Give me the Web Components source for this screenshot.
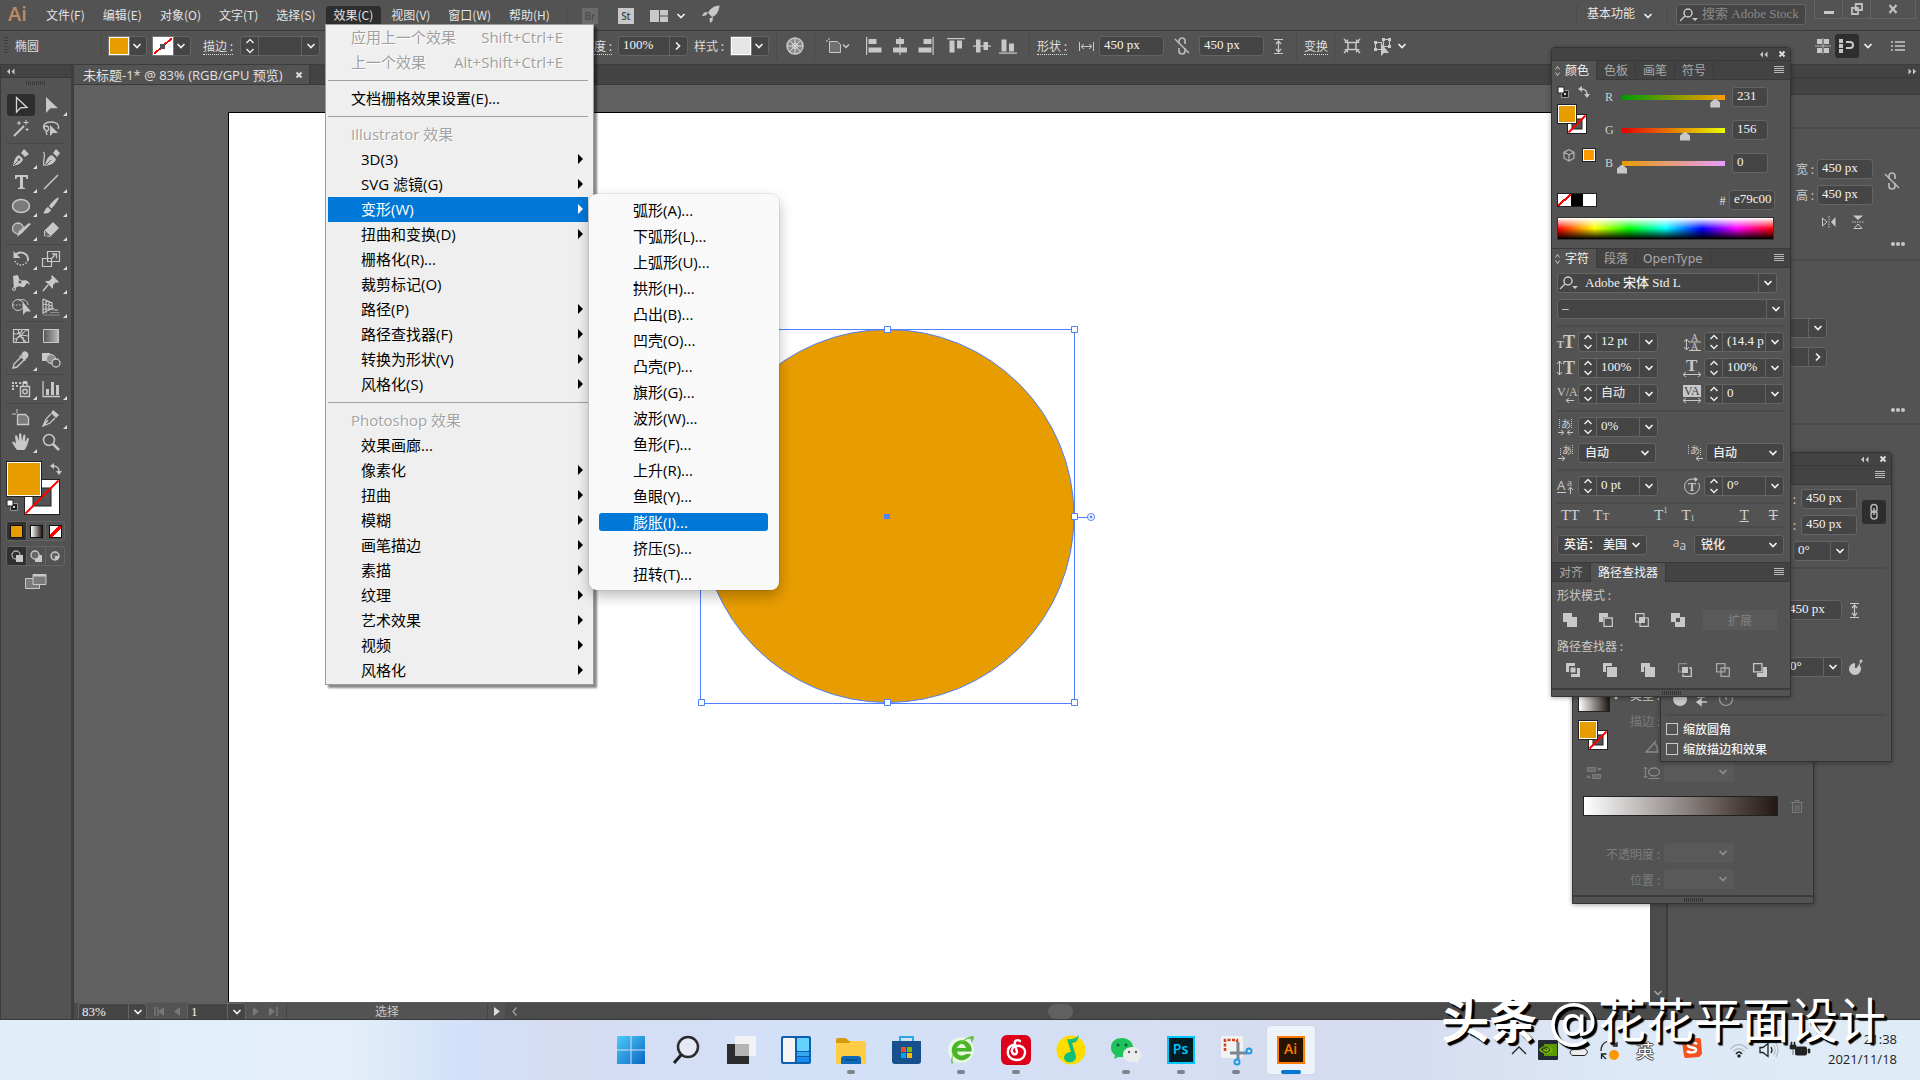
<!DOCTYPE html>
<html lang="zh-CN">
<head>
<meta charset="utf-8">
<title>Illustrator</title>
<style>
html,body{margin:0;height:100%;overflow:hidden;background:#535353}
body{font:12px/16px "Open Sans","Noto Sans CJK SC",sans-serif;color:#e0e0e0}
</style>
</head>
<body>
<ai-app></ai-app>
<script>
const G='#c8c8c8';
const T=(x,y,s,t,w)=>`<text x="${x}" y="${y}" font-size="${s}" font-family="Liberation Serif,Noto Sans CJK JP,serif" font-weight="${w||'bold'}" stroke="none">${t}</text>`;
/* name: [width, height, markup] */
const ICONS={
 sel:[20,20,'<path d="M5.500 2.500v14.500l4-4.200 6.500-.3z" fill="none" stroke="#d8d8d8" stroke-width="1.300"/>'],
 dsel:[20,20,'<path d="M5 2v16l4.500-4.700H17z"/>'],
 wand:[20,20,'<path d="M3 17L13 7" stroke="#c8c8c8" stroke-width="2"/><path d="M8 2v4M6 4h4M15 1v5M12.500 3.500h5M16 9v3M14.500 10.500h3" stroke="#c8c8c8" stroke-width="1"/>'],
 lasso:[20,20,'<path d="M6 12c-6-2-4-9 4-9 7 0 8.500 4 7 7M6 12c-3-1-4-5-1-5s4 4 0 6l1 3" fill="none" stroke="#c8c8c8" stroke-width="1.300"/><path d="M9 6v11l3-3h5z"/>'],
 pen:[20,20,'<path d="M2 18c1-5 2-9 6-11l4 4c-1 4-5 6-10 7zM10 5l3-4 5 5-4 3z"/><path d="M3 17l5-5" stroke="#535353"/><circle cx="8" cy="11.500" r="1.200" fill="#535353"/>'],
 curv:[20,20,'<path d="M4 18c1-5 2-9 7-11l4 4c-1 4-5 6-11 7zM12 5l3-4 4 4-3 4z"/><path d="M5 17l5-5" stroke="#535353"/><path d="M2 4c4 1-1 8 1 14" stroke="#c8c8c8" fill="none" stroke-width="1.200"/>'],
 type:[20,20,'<path d="M4 3h13v4h-1.500l-.5-2h-3v10.500l2 .5v1H7v-1l2-.5V5H6l-.500 2H4z"/>'],
 line:[20,20,'<path d="M3 17L17 3" stroke="#c8c8c8" stroke-width="1.500"/>'],
 ell:[20,20,'<ellipse cx="10" cy="10" rx="8.500" ry="6.500" fill="#7b7b7b" stroke="#c8c8c8" stroke-width="1.500"/>'],
 brush:[20,20,'<path d="M17.500 1.500c1 1-4 8-7 11L8 10C11 6 16 1 17.500 1.500zM7 11l3 3c-1 3-5 4-8 3 2-1 2-5 5-6z"/>'],
 shaper:[20,20,'<circle cx="7" cy="8.500" r="5.500" fill="#7b7b7b" stroke="#c8c8c8" stroke-width="1.300"/><path d="M20 4l-9 9-5 4 2-6 10-8z"/>'],
 eraser:[20,20,'<path d="M3 11L12 2l6 6-9 9-6-1z"/><path d="M4 11l5 5" stroke="#535353"/><path d="M4 12l4 4-4-.5z" fill="#535353"/>'],
 rotate:[20,20,'<path d="M4 7a7 7 0 0 1 13 4" fill="none" stroke="#c8c8c8" stroke-width="2"/><path d="M17 11a7 7 0 0 1-13 1" fill="none" stroke="#c8c8c8" stroke-width="1.500" stroke-dasharray="1.500 1.500"/><path d="M2.500 2v7h7z"/>'],
 scale:[20,20,'<path d="M6.500 2.500h12v10h-12zM1.500 9.500h9v8h-9z" fill="none" stroke="#c8c8c8" stroke-width="1.200"/><path d="M10 10l4-4M11 5h4.500v4.500" fill="none" stroke="#c8c8c8" stroke-width="1.300"/>'],
 width:[20,20,'<path d="M2 3l4-1c3 1 1 6 4 6 3-1 7-2 9 4l-3-2c-2 2-2 5-5 4-3-2-6 0-8 2" fill="#c8c8c8"/><path d="M3 15c4-3 5-8 3-12" stroke="#c8c8c8" fill="none"/><circle cx="9" cy="9" r="2" fill="#535353" stroke="#c8c8c8"/><circle cx="3" cy="16" r="1.500" fill="#535353" stroke="#c8c8c8"/>'],
 pin:[20,20,'<path d="M11 2l7 7-2 1-1-1-3 3v4l-8-8h4l3-3-1-1z"/><path d="M7 12l-5 6" stroke="#c8c8c8" stroke-width="1.500"/>'],
 sbuild:[20,20,'<circle cx="7" cy="8" r="5.500" fill="none" stroke="#c8c8c8"/><path d="M8 4c3-3 9-1 9 4" fill="none" stroke="#c8c8c8"/><path d="M2 8h10" stroke="#c8c8c8" stroke-dasharray="1.500 1.500"/><path d="M12 5v13l3-3.500h5z"/>'],
 persp:[20,20,'<path d="M2 2v15M2 2l9 4v7M5 3v13M8 5v9M2 7l9 2M2 12h9" fill="none" stroke="#c8c8c8" stroke-width="1.200"/><path d="M2 16l10-5 2 2h3" fill="none" stroke="#c8c8c8"/><path d="M11 13h5M9 15.500h9M2 18h17" stroke="#8f8f8f"/>'],
 mesh:[20,20,'<path d="M2.500 3.500h15v13h-15zM3 8c5 0 8-1 8-4M5 16c1-6 4-8 12-6M3 13c4 0 7-4 8-5s3-4 6-4M7 4c1 4 2 7 8 12M12 11c0 2 0 3 1 5" fill="none" stroke="#c8c8c8" stroke-width="1.200"/>'],
 grad:[20,20,'<defs><linearGradient id="g"><stop stop-color="#555"/><stop offset="1" stop-color="#bbb"/></linearGradient></defs><path d="M2.500 3.500h15v13h-15z" fill="url(#g)" stroke="#c8c8c8"/>'],
 drop:[20,20,'<path d="M12 2c2-2 7 1 5 5l-3 3-4-5zM9 5l6 5-1 1-6-5z"/><path d="M10 7l-7 7-1 4 4-1 7-7" fill="none" stroke="#c8c8c8" stroke-width="1.400"/>'],
 blend:[20,20,'<path d="M1 3h8v8H1z"/><circle cx="10" cy="9" r="4.500" fill="#8c8c8c" stroke="#c8c8c8"/><circle cx="15" cy="13" r="4" fill="#535353" stroke="#c8c8c8" stroke-width="1.300"/>'],
 spray:[20,20,'<path d="M9.500 7.500h9v10h-9zM12 7V4h4v3" fill="none" stroke="#c8c8c8" stroke-width="1.400"/><path d="M12 2h4v3h-4z"/><circle cx="14" cy="12.500" r="2.200" fill="none" stroke="#c8c8c8" stroke-width="1.400"/><path d="M1 3h2v2H1zM4 3h2v2H4zM8 3h2v2H8zM1 6h2v2H1zM5 6h2v2H5zM1 9h2v2H1z"/>'],
 graph:[20,20,'<path d="M2 2v15.500h17" fill="none" stroke="#c8c8c8" stroke-width="1.300"/><path d="M5 10h3v6H5zM10 3h3v13h-3zM15 6h3v10h-3z"/>'],
 artb:[20,20,'<path d="M6.500 6.500h8l3 3v7h-11z" fill="#7b7b7b" stroke="#c8c8c8" stroke-width="1.300"/><path d="M6 1v4M1 6h4" stroke="#c8c8c8"/>'],
 slice:[20,20,'<path d="M12 2l6 5-3 3-5-5z"/><path d="M10 6l-5 5-3 7 7-3 5-5M3 17l4-5" fill="none" stroke="#c8c8c8" stroke-width="1.300"/>'],
 hand:[20,20,'<path d="M6 18c-2-3-4-5-5-8 1-1 3 0 4 2L4 4c1-1.500 2-.500 2.500 1L8 9V2c1-1.200 2-1 2.300 0L11 9l1.500-6c1-1 2 0 2 1L14 10l2.500-4c1-.5 1.500.5 1.300 1.500C17 11 16 15 13.500 18z"/>'],
 zoom:[20,20,'<circle cx="8" cy="8" r="5.500" fill="none" stroke="#c8c8c8" stroke-width="1.500"/><path d="M12 12l6 6" stroke="#c8c8c8" stroke-width="2.500"/>'],
 swap:[12,12,'<path d="M3 3c4 0 6 1 6 6" fill="none" stroke="#c8c8c8" stroke-width="1.500"/><path d="M4 0v6L0 3zM6 8h6l-3 4z"/>'],
 deflt:[12,12,'<path d="M4.500 4.500h7v7h-7z" fill="#222" stroke="#999"/><path d="M7 7h2v2H7z" fill="#ccc"/><path d="M1 1h6v6H1z" fill="#fff" stroke="#222"/>'],
 screens:[24,18,'<path d="M1.500 5.500h14v10h-14z" fill="#7b7b7b" stroke="#c8c8c8"/><path d="M9 1.500h13v10H9z" fill="#7b7b7b" stroke="#c8c8c8"/><path d="M9 2.500h13" stroke="#c8c8c8" stroke-width="2"/>'],
 dm1:[14,14,'<circle cx="6" cy="6" r="4" fill="none" stroke="#aaa" stroke-width="1.300"/><path d="M6 6h7v7H6z"/>'],
 dm2:[14,14,'<path d="M6 6h7v7H6z"/><circle cx="6" cy="6" r="4" fill="#666" stroke="#c8c8c8" stroke-width="1.300"/>'],
 dm3:[14,14,'<circle cx="7" cy="7" r="4" fill="#666" stroke="#c8c8c8" stroke-width="1.500"/><path d="M7 7h4a4 4 0 0 1-4 4z"/>'],
 chev:[10,6,'<path d="M1.500 1l3.500 3.500L8.500 1" fill="none" stroke="#f0f0f0" stroke-width="1.700"/>'],
 chevr:[6,10,'<path d="M1 1.500L4.500 5 1 8.500" fill="none" stroke="#f0f0f0" stroke-width="1.700"/>'],
 step:[10,16,'<path d="M1.500 5L5 1.500 8.500 5M1.500 11L5 14.500 8.500 11" fill="none" stroke="#e8e8e8" stroke-width="1.500"/>'],
 dbl:[9,7,'<path d="M4 .5L1 3.500l3 3zM8.500.5l-3 3 3 3z" fill="#c8c8c8"/>'],
 dblr:[9,7,'<path d="M.5.5l3 3-3 3zM5 .5l3 3-3 3z"/>'],
 x:[8,8,'<path d="M1.500 1.500l5 5M6.500 1.500l-5 5" stroke="#dcdcdc" stroke-width="2"/>'],
 ham:[10,8,'<path d="M0 .5h10M0 2.500h10M0 4.500h10M0 6.500h10" stroke="#b8b8b8"/>'],
 diam:[5,10,'<path d="M.5 3.500l2-3 2 3M.5 6.500l2 3 2-3" fill="none" stroke="#c8c8c8"/>'],
 dots:[14,4,'<circle cx="2" cy="2" r="2"/><circle cx="7" cy="2" r="2"/><circle cx="12" cy="2" r="2"/>'],
 layout:[18,12,'<path d="M0 0h9v12H0zM10 0h8v5.500h-8zM10 6.500h8V12h-8z"/>'],
 rocket:[18,18,'<path d="M17.500.5C11 1 8 4 6 8l4 4c5-2 7-6 7.500-11.500zM6 7L2 7.500 0 11l4-.500zM11 12l-.5 4L8 18l-.500-4.500z"/>'],
 globe:[18,18,'<circle cx="9" cy="9" r="8" fill="#8a8a8a" stroke="#c8c8c8" stroke-width="1.500"/><circle cx="9" cy="9" r="2.500" fill="none" stroke="#d8d8d8"/><path d="M9 1v16M1 9h16M3.500 3.500l11 11M14.500 3.500l-11 11" stroke="#d8d8d8"/>'],
 doc:[26,16,'<path d="M3.500 3.500h8l3 3v8h-11z" fill="#707070" stroke="#c8c8c8"/><path d="M3 0v2M0 3h2" stroke="#c8c8c8"/><path d="M17 6.500l3 3 3-3" fill="none" stroke="#c8c8c8" stroke-width="1.500"/>'],
 al1:[16,18,'<path d="M0 0h1.200v18H0zM2.500 2h8v5h-8zM2.500 10.500h13v5h-13z"/>'],
 al2:[16,18,'<path d="M7.500 0h1.200v18H7.500zM4 2h8v5H4zM1 10.500h14v5H1z"/>'],
 al3:[16,18,'<path d="M14.500 0h1.200v18h-1.200zM5.500 2h8v5h-8zM.5 10.500h13v5H.5z"/>'],
 al4:[18,16,'<path d="M0 0h18v1.200H0zM2.500 2.500h5v12h-5zM10 2.500h5v8h-5z"/>'],
 al5:[18,16,'<path d="M0 7.500h18v1.200H0zM3 1.500h4.500v13H3zM10.500 4h4.500v8h-4.500z"/>'],
 al6:[18,16,'<path d="M0 14.500h18v1.200H0zM2.500 1.500h5v12h-5zM10 5.500h5v8h-5z"/>'],
 hw:[15,9,'<path d="M.5 0v9M14.500 0v9M3 4.500h9M5 2L2 4.500 5 7M10 2l3 2.500L10 7" fill="none" stroke="#c8c8c8"/>'],
 vh:[9,15,'<path d="M0 .5h9M0 14.500h9M4.500 3v9M2 5l2.500-3L7 5M2 10l2.500 3L7 10" fill="none" stroke="#c8c8c8" stroke-width="1.200"/>'],
 unlink:[16,18,'<path d="M5 7V4a3 3 0 0 1 6 0v3M5 11v3a3 3 0 0 0 6 0v-3" fill="none" stroke="#b8b8b8" stroke-width="1.700"/><path d="M1 2l14 14" stroke="#b8b8b8" stroke-width="1.500"/>'],
 link:[10,18,'<rect x="2" y="1.500" width="6" height="8" rx="3" fill="none" stroke="#b8b8b8" stroke-width="1.500"/><rect x="2" y="8" width="6" height="8" rx="3" fill="none" stroke="#b8b8b8" stroke-width="1.500"/><path d="M5 5v7" stroke="#b8b8b8" stroke-width="1.500"/>'],
 iso:[18,16,'<path d="M5 4.500h8v7H5z" fill="none" stroke="#c8c8c8" stroke-width="1.500"/><path d="M1 1l3 3M17 1l-3 3M1 15l3-3M17 15l-3-3" stroke="#c8c8c8" stroke-width="1.500"/><path d="M5 1v4H1zM13 1v4h4zM5 15v-4H1zM13 15v-4h4z"/>'],
 simi:[18,18,'<path d="M1.500 5.500h6v7h-6zM9.500 2.500h6v7h-6z" fill="none" stroke="#c8c8c8" stroke-width="1.200"/><path d="M0 4h3v3H0zM0 11h3v3H0zM8 1h3v3H8zM14 1h3v3h-3zM14 8h3v3h-3z"/><path d="M7 6v13l3-3h5z"/>'],
 gridi:[16,16,'<path d="M2 1h5v5H2zM9 1h5v5H9zM2 10h5v5H2zM9 10h5v5H9z"/><path d="M8 0v16M0 8h16" stroke="#c8c8c8" stroke-width=".8"/>'],
 snap:[18,16,'<path d="M1 1h4v4H1zM1 6h4v4H1zM1 11h4v4H1z"/><path d="M8 4h4a3 3 0 0 1 0 6H8" fill="none" stroke="#c8c8c8" stroke-width="2"/>'],
 list:[14,10,'<path d="M0 1h2M4 1h10M0 5h2M4 5h10M0 9h2M4 9h10" stroke="#c8c8c8" stroke-width="1.400"/>'],
 search:[18,14,'<circle cx="8" cy="5" r="4" fill="none" stroke="#c8c8c8" stroke-width="1.500"/><path d="M5 8l-5 5" stroke="#c8c8c8" stroke-width="1.500"/><path d="M12 10h6l-3 3z"/>'],
 cube:[12,13,'<path d="M6 .7l5 2.500v6L6 12 1 9.200v-6zM1 3.200l5 2.500 5-2.500M6 5.700V12" fill="none" stroke="#b0b0b0" stroke-width="1.200"/>'],
 fliph:[14,12,'<path d="M0.500 2v8L5 6z" fill="none" stroke="#c8c8c8"/><path d="M13.500 1v10L9 6z"/><path d="M7 0v12" stroke="#c8c8c8" stroke-dasharray="1.500 1"/>'],
 flipv:[12,14,'<path d="M2 13.500h8L6 9z" fill="none" stroke="#c8c8c8"/><path d="M1 .5h10L6 5z"/><path d="M0 7h12" stroke="#c8c8c8" stroke-dasharray="1.500 1"/>'],
 c1:[18,18,T(0,15,10,'T')+T(6,15,18,'T')],
 c2:[18,18,'<path d="M2.500 2v14M0 5l2.500-3L5 5M0 13l2.500 3L5 13" fill="none" stroke="#c8c8c8"/>'+T(6,15,18,'T')],
 c3:[18,18,T(0,11,12,'V/A','normal')+'<path d="M17 15.500H10M12 13l-3 2.500 3 2.500" fill="none" stroke="#c8c8c8"/>'],
 d1:[18,18,'<path d="M3.500 6v11M1 9l2.500-3L6 9M1 14l2.500 3L6 14M6 9h12M6 17.500h12" fill="none" stroke="#c8c8c8"/>'+T(8,8,10,'A','normal')+T(8,17,10,'A','normal')],
 d2:[18,18,T(3,12,17,'T')+'<path d="M1 15.500h16M3 13l-3 2.500L3 18M15 13l3 2.500-3 2.500" fill="none" stroke="#c8c8c8"/>'],
 d3:[18,18,'<path d="M0 0h18v12H0z"/><text x="1" y="10" font-size="12" font-family="Liberation Serif" fill="#444">VA</text><path d="M1 15.500h16M3 13l-3 2.500L3 18M15 13l3 2.500-3 2.500" fill="none" stroke="#c8c8c8"/>'],
 ts1:[18,16,'<path d="M2.500 0v10M14.500 0v10" stroke="#c8c8c8" stroke-dasharray="1 1"/>'+T(4,9,10,'あ','normal')+'<path d="M1 13.500h5M16 13.500h-5M4 11l3 2.500L4 16M13 11l-3 2.500 3 2.500" fill="none" stroke="#c8c8c8"/>'],
 ts2:[18,16,'<path d="M3.500 3v7M15.500 0v10" stroke="#c8c8c8" stroke-dasharray="1 1"/>'+T(5,9,10,'あ','normal')+'<path d="M1 13.500h6M5 11l3 2.500L5 16" fill="none" stroke="#c8c8c8"/>'],
 ts3:[16,16,'<path d="M1.500 0v10M13.500 3v7" stroke="#c8c8c8" stroke-dasharray="1 1"/>'+T(3,9,10,'あ','normal')+'<path d="M16 13.500h-6M12 11l-3 2.500 3 2.500" fill="none" stroke="#c8c8c8"/>'],
 base:[18,16,'<text x="0" y="12" font-size="13" font-family="Open Sans">A</text><text x="10" y="8" font-size="9" font-family="Open Sans">a</text><path d="M0 14.500h9M13.500 16v-6M11 12l2.500-3 2.500 3" fill="none" stroke="#c8c8c8"/>'],
 rot:[18,18,'<circle cx="9" cy="9.500" r="7.500" fill="none" stroke="#c8c8c8" stroke-dasharray="40 3"/>'+T(5,14,12,'T')+'<path d="M11 0l4 2-3 3z"/>'],
 pu:[14,14,'<path d="M0 0h9v4h5v10H4V9H0z"/>'],
 pm:[14,14,'<path d="M0 0h9v4H4v5H0z"/><path d="M5 5h8.300v8.300H5z" fill="none" stroke="#c8c8c8" stroke-width="1.300"/>'],
 pi:[14,14,'<path d="M.6.600h8.300v8.300H.6zM5 5h8.300v8.300H5z" fill="none" stroke="#c8c8c8" stroke-width="1.200"/><path d="M4 4h6v6H4z"/>'],
 pe:[14,14,'<path fill-rule="evenodd" d="M0 0h9v4h5v10H4V9H0zM5 5v4h4V5z"/>'],
 pd:[14,14,'<path d="M0 0h9v3H3v6H0zM11 5h3v9H5v-3h6z"/><path d="M4.500 4.500h5v5h-5z" fill="#c8c8c8"/>'],
 pt:[14,14,'<path d="M0 0h9v3H3v6H0zM4 4h10v10H4z"/>'],
 pg:[14,14,'<path d="M0 0h9v4h5v10H4V9H0z"/><path d="M3.500 9V4" stroke="#535353"/>'],
 pc:[14,14,'<path d="M.6.600h8.300M.6.600v8.300h3" fill="none" stroke="#8a8a8a" stroke-width="1.200"/><path d="M11 5h2.300v8.300H5V11" fill="none" stroke="#c8c8c8" stroke-width="1.300"/><path d="M4 4h6v6H4z"/>'],
 po:[14,14,'<path d="M.6.600h8.300v8.300H.6zM5 5h8.300v8.300H5z" fill="none" stroke="#a8a8a8" stroke-width="1.300"/>'],
 pb:[14,14,'<path d="M10 4h4v10H4v-4h6z"/><path d="M.6.600h8.300v8.300H.6z" fill="#535353" stroke="#c8c8c8" stroke-width="1.300"/>'],
 dial:[14,16,'<path d="M6 4a6 6 0 1 0 6 6c0-1-.5-3-1.500-4L8 9 6 9z"/><circle cx="12" cy="2" r="1.500"/><path d="M8 9l4-6" stroke="#c8c8c8"/>'],
 pie:[62,14,'<path d="M7 0a7 7 0 1 0 .1 0zM7 0v3z"/><path d="M25 10h9M28 7l-4 3 4 3zM24 5h8" fill="#c8c8c8" stroke="#c8c8c8" stroke-width="1.500"/><circle cx="53" cy="7" r="6.500" fill="none" stroke="#a0a0a0" stroke-width="1.200"/><path d="M53 3v5" stroke="#c8c8c8"/>'],
 tri:[6,4,'<path d="M0 0h6L3 4z"/>'],
 angle:[15,13,'<path d="M11 1L1 12h13M9 3c3 2 4 5 3 9" fill="none" stroke="#8a8a8a" stroke-width="1.300"/>'],
 aspect:[17,14,'<ellipse cx="11" cy="6" rx="5.500" ry="4" fill="none" stroke="#8a8a8a" stroke-width="1.300"/><path d="M2.500 1v11M.5 3l2-2 2 2M.5 10l2 2 2-2M5.500 12.500h11" fill="none" stroke="#8a8a8a"/>'],
 rev:[16,14,'<path d="M1.500 1.500h8v4h-8zM6.500 8.500h8v4h-8z" fill="#6a6a6a" stroke="#7b7b7b"/><path d="M11 2h5l-2.500 3zM0 12h5L2.500 9z" fill="#7b7b7b"/>'],
 trash:[12,13,'<path d="M1.500 3v9.500h9V3M0 2.500h12M4 2V.5h4V2M4 5v6M6 5v6M8 5v6" fill="none" stroke="#7b7b7b"/>'],
 first:[10,9,'<path d="M1 0v9M4 0v9" stroke="#777" stroke-width="1.500"/><path d="M10 0v9L4 4.500z" fill="#777"/>'],
 prev:[6,9,'<path d="M6 0v9L0 4.500z" fill="#777"/>'],
 next:[6,9,'<path d="M0 0v9l6-4.500z" fill="#777"/>'],
 last:[10,9,'<path d="M8 0v9" stroke="#777" stroke-width="1.500"/><path d="M0 0v9l6-4.500z" fill="#777"/>'],
 play:[6,9,'<path d="M0 0v9l6-4.500z" fill="#ddd"/>'],
 back:[5,9,'<path d="M4.500.5l-3.500 4 3.500 4" fill="none" stroke="#a0a0a0" stroke-width="1.300"/>'],
 win:[30,30,'<defs><linearGradient id="g" x2="1" y2="1"><stop stop-color="#4fcbf8"/><stop offset="1" stop-color="#0a66c4"/></linearGradient></defs><path d="M1 1h13.500v13.500H1zM15.500 1H29v13.500H15.500zM1 15.500h13.500V29H1zM15.500 15.500H29V29H15.500z" fill="url(#g)"/>'],
 find:[30,30,'<circle cx="17" cy="12" r="10" fill="#e4ebf6" stroke="#2b2b2b" stroke-width="2.500"/><path d="M10 20l-7 8" stroke="#1d1d1d" stroke-width="3"/>'],
 task:[30,30,'<path d="M1 9h22v20H1z" fill="#2c2c2c"/><path d="M9 1h21v20H9z" fill="#f2f2f2" opacity=".95"/><path d="M9 9h14v12H9z" fill="#b4b4b4"/>'],
 widg:[30,30,'<rect x="0" y="1" width="30" height="28" rx="2" fill="#0f5fae"/><rect x="2" y="3" width="12" height="24" rx="1" fill="#f5f5f5"/><rect x="16" y="3" width="12" height="13" rx="1" fill="#64d2fa"/><rect x="16" y="17" width="12" height="4" fill="#31a8ee"/><rect x="16" y="22" width="12" height="5" fill="#1b8ff0"/>'],
 folder:[32,30,'<path d="M1 5q0-2 2-2h8l3 3h16q1 0 1 1v20q0 2-2 2H3q-2 0-2-2z" fill="#d99a10"/><path d="M1 8h13l2-2h15v21q0 2-2 2H3q-2 0-2-2z" fill="#ffcd45"/><path d="M6 29v-5q0-3 3-3h14q3 0 3 3v5z" fill="#0f68b8"/><path d="M10 25h12" stroke="#0a4a88" stroke-width="1.500"/>'],
 store:[30,30,'<path d="M9 7V2h13v5" fill="none" stroke="#2aa7e8" stroke-width="2"/><path d="M1 6h29v20q0 3-3 3H4q-3 0-3-3z" fill="#17508c"/><path d="M10 12h5v5h-5z" fill="#f25022"/><path d="M16 12h5v5h-5z" fill="#7fba00"/><path d="M10 18h5v5h-5z" fill="#00a4ef"/><path d="M16 18h5v5h-5z" fill="#ffb900"/>'],
 ie:[30,30,'<circle cx="15" cy="15" r="13" fill="#e9f7e2"/><path d="M25 19a10 10 0 1 1 .5-6l.2 3.500H11q1 4.500 5 4 3-.5 4-1.500zM11 13h9q-1-4-4.500-4T11 13z" fill="#49b427" fill-rule="evenodd"/><path d="M6 29C2 25 12 3 27 1c3 1-1 6-2 7 1-5-1-6-7-2C9 12 5 22 7 28z" fill="#64c53b"/>'],
 net:[30,30,'<rect width="30" height="30" rx="6" fill="#dd001b"/><path d="M19 6c-3-2-6 0-5 3l2 8c0 3-4 3-5 0-1-4 3-7 8-6 8 2 6 14-3 14-7 0-10-5-9-9 0-3 2-5 5-6" fill="none" stroke="#fff" stroke-width="2.400" stroke-linecap="round"/>'],
 qq:[30,30,'<circle cx="15" cy="15" r="14.500" fill="#ffdc00"/><path d="M11 4c4 1 8 0 12-4-1 5-3 8-7 8l4 13c1 7-11 9-12 2 0-4 4-6 7-6z" fill="#0fbf7c"/>'],
 wechat:[32,30,'<path d="M1 13C1 6 6 3 12 3s11 4 11 9-5 10-11 10l-4 0-4 2 1-4c-3-2-4-4-4-7z" fill="#1ec45a"/><circle cx="8" cy="10" r="1.500" fill="#155"/><circle cx="16" cy="10" r="1.500" fill="#155"/><path d="M13 20c0-5 4-8 9-8s9 3 9 8c0 3-1 5-3 6v2l-3-1c-6 1-12-2-12-7z" fill="#ececec"/><circle cx="19" cy="17" r="1.200" fill="#555"/><circle cx="26" cy="17" r="1.200" fill="#555"/>'],
 snip:[32,30,'<rect x="1" y="1" width="22" height="22" rx="2" fill="#f2f2f2"/><path d="M5 16V5h12v2" fill="none" stroke="#d4431a" stroke-width="2.500" stroke-dasharray="3 1.500"/><path d="M18 7v17M10 18h17" stroke="#7b8794" stroke-width="3"/><circle cx="17" cy="27" r="2.500" fill="none" stroke="#1f9bde" stroke-width="2"/><circle cx="29" cy="16" r="2.500" fill="none" stroke="#1f9bde" stroke-width="2"/>'],
 up:[16,9,'<path d="M1 8l7-7 7 7" fill="none" stroke="#222" stroke-width="1.300"/>'],
 nv:[20,20,'<rect width="20" height="20" rx="1" fill="#232a33"/><path d="M6 4h13v12H6z" fill="#5b9a00"/><path d="M1 10c4-6 11-5 14 0-3 5-10 5-14 0z" fill="#76b900"/><path d="M3 10c3-4 7-4 9 0-2 3-6 3-8 0 2-2 4-2 5 0" fill="none" stroke="#223"/>'],
 cloud:[20,14,'<path d="M4 12.500c-4-1-4-6 1-6 1-5 8-5 9-1 5 0 6 6 1 7z" fill="#eee" stroke="#222"/>'],
 sync:[20,20,'<path d="M1 11C1 6 3 3 7 1.500M12 1.500c2 1 4 2 5 4M17 2v4h-4M6 19l-4-4M1.500 19v-5h5" fill="none" stroke="#222" stroke-width="1.300"/><circle cx="14" cy="15" r="5" fill="#ff9800"/>'],
 sogou:[20,20,'<path d="M2 1l15-1q2 0 2 2l1 14-3 3-13 1q-2 0-2-2L0 4z" fill="#f4511e"/><path d="M15 6c-3-2-9-2-9 1 0 4 8 1 8 5 0 3-7 3-9 1" fill="none" stroke="#fff" stroke-width="2.500"/>'],
 wifi:[18,16,'<path d="M.5 7q8.500-9 17 0M3.500 9.500q5.500-6 11 0" fill="none" stroke="#b7bfc8" stroke-width="1.500"/><path d="M6 12q3-4 6 0" fill="none" stroke="#222" stroke-width="1.500"/><circle cx="9" cy="14" r="1.700" fill="#222"/>'],
 vol:[20,16,'<path d="M1 5.500h3L9 1.500v13L4 10.500H1z" fill="none" stroke="#222" stroke-width="1.300"/><path d="M12 5q2 3 0 6" fill="none" stroke="#222" stroke-width="1.300"/><path d="M14.500 3q3.500 5 0 10M17 1q4 7 0 14" fill="none" stroke="#b7bfc8" stroke-width="1.200"/>'],
 bat:[20,16,'<rect x="5" y="4.500" width="12" height="9" rx="2" fill="#222"/><path d="M18 7h2v4h-2zM0 3h6v4H0zM1 0h1v3H1zM4 0h1v3H4zM3 7v6" fill="#222" stroke="#222" stroke-width=".6"/>'],
 min:[10,12,'<path d="M0 8h10v3H0z"/>'],
 rest:[12,12,'<path d="M4.700 1h6.300v6H4.700zM1 5h6v6H1z" fill="none" stroke="#c0c0c0" stroke-width="1.800"/>'],
 cls:[10,10,'<path d="M1.500 1l7 8M8.500 1l-7 8" stroke="#c0c0c0" stroke-width="2.200"/>']
};
const BASE=`<style>
*{box-sizing:border-box}
:host{display:block;box-sizing:border-box}
button,input,select{font:inherit;color:inherit;margin:0;padding:0;border:0;background:none;border-radius:0;outline:0;min-width:0}
button{display:inline-flex;align-items:center;justify-content:center;white-space:nowrap}
select{appearance:none}
</style>`;
const define=(name,html)=>customElements.define(name,class extends HTMLElement{
  constructor(){super();this.attachShadow({mode:'open'});}
  connectedCallback(){this.shadowRoot.innerHTML=BASE+(typeof html==='function'?html(this):html);}
});
const ic=n=>`<ui-icon name="${n}"></ui-icon>`;

define('ui-icon',e=>{const [w,h,m]=ICONS[e.getAttribute('name')];
  return `<style>:host{display:inline-block;flex:none;width:${w}px;height:${h}px}svg{display:block;overflow:visible}</style><svg width="${w}" height="${h}" viewBox="0 0 ${w} ${h}" fill="${G}" aria-hidden="true">${m}</svg>`;});

/* numeric box: optional stepper, text input, optional end button */
define('num-field',e=>{const a=n=>e.getAttribute(n);
 return `<style>
 :host{display:flex;height:20px;flex:none;width:${a('w')}px;border:1px solid #646464;border-radius:3px;background:#454545;
   font:13px/18px "Liberation Serif","Noto Sans CJK SC",serif;color:#f4f4f4;overflow:hidden}
 :host([cjk]){font-size:12px}
 .s{width:18px;border-right:1px solid #646464;flex:none}
 input{flex:1;width:20px;padding:0 1px 2px 4px}
 .c{width:18px;border-left:1px solid #646464;flex:none}
 </style>${e.hasAttribute('stepper')?`<button class="s" aria-label="增减">${ic('step')}</button>`:''}
 <input aria-label="${a('label')||'数值'}" value="${a('value')||''}">${a('end')?`<button class="c" aria-label="展开">${ic(a('end'))}</button>`:''}`;});

define('drop-list',e=>`<style>
 :host{display:inline-grid;grid-template-columns:1fr 16px;align-items:center;flex:none;height:20px;width:${e.getAttribute('w')}px;border:1px solid #646464;border-radius:3px;background:#454545;color:#f0f0f0;font:500 12px/18px "Liberation Serif","Noto Sans CJK SC",serif;padding-right:2px}
 :host([off]){border-color:#595959;background:#595959}
 :host([off]) ui-icon{opacity:.35}
 select{grid-row:1;grid-column:1/3;padding-left:6px;height:18px}
 ui-icon{grid-row:1;grid-column:2;pointer-events:none;justify-self:center}
 </style><select aria-label="${e.getAttribute('label')}" ${e.hasAttribute('off')?'disabled':''}><option>${e.getAttribute('value')||''}</option></select>${ic('chev')}`);

/* overlapping fill and stroke squares */
define('fill-stroke',e=>{const s=+e.getAttribute('s'),o=+e.getAttribute('o'),t=s+o,k=Math.round(s/4);
 return `<style>:host{display:block;flex:none;width:${t}px;height:${t}px}svg{display:block}</style><svg width="${t}" height="${t}">
 <g transform="translate(${o} ${o})"><rect x=".5" y=".5" width="${s-1}" height="${s-1}" fill="#fff" stroke="#222"/><rect x="${s/2-k}" y="${s/2-k}" width="${2*k}" height="${2*k}" fill="#535353" stroke="#222"/><path d="M1.500 ${s-1.5}L${s-1.5} 1.500" stroke="#f00" stroke-width="2"/></g>
 <rect x=".5" y=".5" width="${s-1}" height="${s-1}" fill="#fff" stroke="#222"/><rect x="2" y="2" width="${s-4}" height="${s-4}" fill="#e79c00"/></svg>`;});

define('colour-chip',e=>`<style>:host{display:block;flex:none;width:${e.getAttribute('s')}px;height:${e.getAttribute('s')}px;border:1px solid #222;padding:1px;background:#fff}
 i{display:block;height:100%;background:${e.getAttribute('c')}}</style><i></i>`);

define('menu-bar',`<style>
 :host{display:flex;height:31px;border-bottom:1px solid #3c3c3c;background:#535353;padding-left:8px;font-family:"Noto Sans CJK SC",sans-serif;color:#e4e4e4}
 .logo{width:30px;font:600 20px/27px "Open Sans",sans-serif;color:#c08a62}
 nav{display:flex;gap:2px;padding-top:6px}
 nav button{height:18px;padding:0 8px}
 nav .on{background:#2e2e2e;border-radius:3px 3px 0 0}
 .app{display:flex;align-items:center;padding-left:15px;margin:5px 0 4px 8px;border-left:1px solid #4a4a4a;flex:1}
 .badge{width:16px;height:16px;font:600 10px/16px "Open Sans",sans-serif;text-align:center;background:#c8c8c8;color:#444;margin-right:16px}
 .badge.off{background:#6b6b6b;color:#4c4c4c;margin-right:20px}
 .app ui-icon{margin-right:8px}
 .app .r{margin-left:8px}
 .ws{display:flex;align-items:center;gap:8px;border-left:1px solid #4a4a4a;border-right:1px solid #4a4a4a;padding:0 14px 4px 10px;margin:5px 8px 6px 0}
 .ws ui-icon{margin-top:6px}
 .find{display:flex;align-items:center;gap:4px;width:130px;height:21px;margin:4px 8px 0 0;border:1px solid #666;border-radius:3px;background:#454545;padding-left:3px;font:13px/18px "Liberation Serif","Noto Sans CJK SC",serif}
 .find input{width:102px;padding-bottom:2px}
 .find input::placeholder{color:#8a8a8a;opacity:1}
 .win{display:flex;width:102px;height:19px;border:1px solid #646464;border-top:0;margin-right:4px}
 .win button{flex:1}.win button+button{border-left:1px solid #646464}.win button:last-child{flex:1 0 18px}
 </style>
 <div class="logo">Ai</div>
 <nav><button>文件(F)</button><button>编辑(E)</button><button>对象(O)</button><button>文字(T)</button><button>选择(S)</button><button class="on">效果(C)</button><button>视图(V)</button><button>窗口(W)</button><button>帮助(H)</button></nav>
 <div class="app"><div class="badge off">Br</div><div class="badge">St</div>${ic('layout')}${ic('chev')}<span class="r">${ic('rocket')}</span></div>
 <button class="ws">基本功能 ${ic('chev')}</button>
 <label class="find">${ic('search')}<input placeholder="搜索 Adobe Stock" aria-label="搜索"></label>
 <div class="win"><button aria-label="最小化">${ic('min')}</button><button aria-label="还原">${ic('rest')}</button><button aria-label="关闭">${ic('cls')}</button></div>`);

define('control-bar',`<style>
 :host{display:flex;align-items:center;height:34px;border-bottom:1px solid #3c3c3c;background:#535353;padding:1px 15px 4px 4px;font-family:"Noto Sans CJK SC",sans-serif;color:#dedede;white-space:nowrap}
 .grip{width:4px;height:18px;background:repeating-linear-gradient(#3c3c3c 0 1px,transparent 1px 3px);margin-right:7px}
 .g{display:flex;align-items:center;height:28px;flex:none}
 .g+.g{border-left:1px solid #4a4a4a}
 .sw{display:flex;height:20px;width:39px;border:1px solid #646464;border-radius:0 3px 3px 0;background:#454545}
 .sw i{width:20px;border:1px solid #fff;outline:1px solid #777;background:#e79c00}
 .sw i.n{background:linear-gradient(#535353,#535353) 50%/5px 5px no-repeat,linear-gradient(to top left,transparent 46%,#f00 46% 54%,transparent 54%),#fff}
 .sw i.w{background:#e6e6e6}
 .sw button{width:18px}
 u{text-decoration:none;border-bottom:1px dotted #ddd;line-height:17px}
 .sel{background:#2e2e2e;border-radius:3px;width:24px;height:24px}
 .sp{flex:1}
 </style>
 <div class="grip"></div><div class="g" style="width:86px">椭圆</div>
 <div class="g" style="width:493px;padding-left:6px;gap:5px">
  <span class="sw"><i></i><button aria-label="填色">${ic('chev')}</button></span><span class="sw"><i class="n"></i><button aria-label="描边色">${ic('chev')}</button></span>
  <u style="margin-left:7px">描边 :</u><num-field style="margin-left:2px" stepper w="80" end="chev" label="描边"></num-field></div>
 <div class="g" style="width:182px;gap:6px;justify-content:flex-end;border:0;padding-right:7px"><u>度 :</u><num-field w="70" value="100%" end="chevr" label="不透明度"></num-field><span>样式 :</span><span class="sw"><i class="w"></i><button aria-label="样式">${ic('chev')}</button></span></div>
 <div class="g" style="width:38px;padding-left:9px">${ic('globe')}</div>
 <div class="g" style="width:215px;padding-left:11px">${ic('doc')}<span class="g" style="gap:10px;padding-left:14px;border:0">${['al1','al2','al3'].map(ic).join('')}</span><span class="g" style="gap:8px;padding-left:13px;border:0">${['al4','al5','al6'].map(ic).join('')}</span></div>
 <div class="g" style="width:267px;padding-left:7px"><u style="margin-right:12px">形状 :</u>${ic('hw')}<num-field style="margin:0 10px 0 5px" w="65" value="450 px" label="宽"></num-field>${ic('unlink')}<num-field style="margin:0 10px 0 9px" w="65" value="450 px" label="高"></num-field>${ic('vh')}</div>
 <div class="g" style="width:38px;padding-left:7px"><u>变换</u></div>
 <div class="g" style="padding-left:8px;gap:5px">${ic('iso')}<span style="width:3px"></span>${ic('simi')}${ic('chev')}</div>
 <div class="sp"></div>
 <div class="g" style="gap:4px">${ic('gridi')}<button class="sel" aria-label="对齐">${ic('snap')}</button>${ic('chev')}<span style="width:10px"></span>${ic('list')}</div>`);

const tool=(n,f)=>`<button aria-label="${n}" class="${f||''}">${ic(n)}</button>`;
define('tool-panel',`<style>
 :host{display:flex;flex-direction:column;width:74px;background:#535353;border-left:1px solid #3c3c3c;border-right:3px solid #3e3e3e}
 .h{height:13px;background:#434343;border-bottom:1px solid #3a3a3a;padding:3px 5px}
 .h ui-icon{vertical-align:top}
 .grip{width:19px;height:4px;margin:3px auto 8px 25px;background:repeating-linear-gradient(90deg,#3a3a3a 0 1px,transparent 1px 2px)}
 .t{display:grid;grid-template-columns:30px 30px;grid-auto-rows:24px;margin-left:5px}
 .t+.t{margin-top:5px;position:relative}
 .t+.t::before{content:"";position:absolute;top:-3px;left:0;width:60px;height:1px;background:#484848}
 .t button{border-radius:3px;position:relative}
 .t .on{background:#2e2e2e;width:28px;height:22px;margin:1px}
 .t .f::after{content:"";position:absolute;right:-1px;bottom:1px;border:2px solid transparent;border-right-color:#ddd;border-bottom-color:#ddd}
 .c{display:grid;grid-template-columns:1fr auto;width:56px;margin:7px 0 6px 5px;height:54px}
 .c>*{grid-row:1;grid-column:1/3}
 .c .s{justify-self:end;margin-top:2px}.c .d{align-self:end}
 .b{display:grid;grid-template-columns:repeat(3,1fr);width:59px;height:20px;margin:0 0 5px 5px;border:1px solid #646464;border-radius:3px;overflow:hidden}
 .b button+button{border-left:1px solid #646464}
 .b .on{background:#303030}
 .b i{display:block;width:13px;height:13px;border:1px solid #111;background:#e79c00}
 .b .g{background:linear-gradient(90deg,#fff,#231815)}
 .b .n{background:linear-gradient(to top left,transparent 40%,#f00 40% 60%,transparent 60%),#fff}
 .scr{align-self:flex-start;margin:2px 0 0 23px}
 </style>
 <div class="h">${ic('dbl')}</div><div class="grip"></div>
 <div class="t">${tool('sel','on')}${tool('dsel','f')}${tool('wand')}${tool('lasso')}</div>
 <div class="t">${tool('pen','f')}${tool('curv')}${tool('type','f')}${tool('line','f')}${tool('ell','f')}${tool('brush','f')}${tool('shaper','f')}${tool('eraser','f')}</div>
 <div class="t">${tool('rotate','f')}${tool('scale','f')}${tool('width','f')}${tool('pin','f')}${tool('sbuild','f')}${tool('persp','f')}</div>
 <div class="t">${tool('mesh')}${tool('grad')}${tool('drop','f')}${tool('blend')}</div>
 <div class="t">${tool('spray','f')}${tool('graph','f')}</div>
 <div class="t">${tool('artb')}${tool('slice','f')}${tool('hand','f')}${tool('zoom')}</div>
 <div class="c"><fill-stroke s="36" o="18"></fill-stroke><span class="s">${ic('swap')}</span><span class="d">${ic('deflt')}</span></div>
 <div class="b"><button class="on" aria-label="颜色"><i></i></button><button aria-label="渐变"><i class="g"></i></button><button aria-label="无"><i class="n"></i></button></div>
 <div class="b"><button class="on" aria-label="正常绘图">${ic('dm1')}</button><button aria-label="背面绘图">${ic('dm2')}</button><button aria-label="内部绘图">${ic('dm3')}</button></div>
 <button class="scr" aria-label="屏幕模式">${ic('screens')}</button>`);

define('doc-view',`<style>
 :host{display:grid;grid-template-rows:20px 1fr 17px;min-width:0;background:#434343}
 .tab{display:flex;align-items:center;width:236px;height:19px;background:#535353;border-right:1px solid #3a3a3a;padding:0 6px 0 9px;justify-content:space-between;font:13px/18px "Open Sans","Noto Sans CJK SC",sans-serif}
 .tabs{border-bottom:1px solid #3a3a3a}
 .v{display:grid;grid-template-columns:1fr 16px;min-height:0}
 .bg{background:#606060;padding:27px 0 0 154px;overflow:hidden}
 .art{height:100%;background:#fff;border:1px solid #000;border-width:1px 0 0 1px;position:relative}
 .art svg{position:absolute;left:464px;top:208px;display:block}
 .sb{background:#4b4b4b;display:flex;align-items:flex-end;justify-content:center;padding-bottom:6px}
 .sb ui-icon{opacity:.5}
 .st{display:flex;align-items:flex-end;border-top:1px solid #5c5c5c;background:#4b4b4b;padding-left:4px;font:13px/16px "Liberation Serif","Noto Sans CJK SC",serif;overflow:hidden}
 .bx{display:flex;background:#454545;border:1px solid #646464;border-bottom:0;border-radius:3px 3px 0 0;height:16px;color:#f2f2f2}
 .bx input{padding-left:3px}.bx button{width:18px;border-left:1px solid #646464}
 .nv{display:flex;align-items:center;justify-content:center;gap:10px;width:40px;height:16px;background:#535353}
 .mid{width:202px;height:16px;background:#535353;border-left:1px solid #454545;border-right:1px solid #454545;text-align:center;color:#c8c8c8;font-size:12px;line-height:18px}
 .pl{width:17px;height:16px;background:#535353;display:flex;align-items:center;justify-content:center}
 .hs{flex:1;display:flex;align-items:center;padding-left:7px}
 .hs b{width:25px;height:15px;border-radius:8px;background:#606060;margin-left:46%}
 </style>
 <div class="tabs"><div class="tab"><span>未标题-1* @ 83% (RGB/GPU 预览)</span>${ic('x')}</div></div>
 <div class="v"><div class="bg"><div class="art"><svg width="410" height="390" fill="none" stroke="#4f80ff">
   <circle cx="194.500" cy="195" r="186.500" fill="#e79c00"/>
   <path d="M7.500 8.500h374v374h-374zM382 196.500h13"/><circle cx="398" cy="196" r="3.500" fill="#fff"/><circle cx="398" cy="196" r="1" fill="#4f80ff"/>
   <g fill="#fff"><path d="M5.500 378.500h6v6h-6zM378.500 378.500h6v6h-6zM378.500 5.500h6v6h-6zM191.500 5.500h6v6h-6zM191.500 378.500h6v6h-6zM378.500 192.500h6v6h-6z"/></g>
   <path d="M191 193h6v5h-6z" fill="#4f80ff" stroke="none"/></svg></div></div><div class="sb">${ic('chev')}</div></div>
 <div class="st"><span class="bx"><input style="width:49px" value="83%" aria-label="缩放"><button aria-label="缩放列表">${ic('chev')}</button></span>
  <span class="nv">${ic('first')}${ic('prev')}</span><span class="bx"><input style="width:39px" value="1" aria-label="画板"><button aria-label="画板列表">${ic('chev')}</button></span>
  <span class="nv">${ic('next')}${ic('last')}</span><span class="mid">选择</span><span class="pl">${ic('play')}</span><span class="hs">${ic('back')}<b></b></span></div>`);

define('panel-dock',`<style>
 :host{display:block;width:254px;background:#535353;border-left:2px solid #3e3e3e;color:#c8c8c8;font-family:"Noto Sans CJK SC",sans-serif}
 .h{height:13px;background:#434343;border-bottom:1px solid #3a3a3a;display:flex;justify-content:flex-end;padding:3px 3px}
 .t{height:17px;background:#434343;border-bottom:1px solid #3a3a3a}
 section{border-bottom:2px solid #4a4a4a}
 .a{height:34px}
 .r{display:flex;align-items:center;justify-content:flex-end;gap:5px;height:20px}
 .f{display:grid;grid-template-columns:1fr auto 47px;align-items:center}
 .f>div{display:grid;gap:6px}
 .f .r{gap:3px}
 .m{padding:0 15px 0 0}
 </style>
 <div class="h">${ic('dblr')}</div><div class="t"></div>
 <section class="a"></section>
 <section style="padding-top:30px;height:132px"><div class="f"><span></span><div><span class="r">宽 :<num-field w="56" value="450 px" label="宽"></num-field></span><span class="r">高 :<num-field w="56" value="450 px" label="高"></num-field></span></div><span style="padding-left:11px">${ic('unlink')}</span></div>
  <div class="r" style="gap:16px;padding:10px 56px 0 0;height:24px">${ic('fliph')}${ic('flipv')}</div><div class="r m" style="padding-top:8px;height:22px">${ic('dots')}</div></section>
 <section style="padding-top:57px;height:164px"><div class="r" style="padding-right:93px"><num-field w="56" end="chev" label="填色"></num-field></div><div class="r" style="padding-right:93px;margin-top:9px"><num-field w="56" end="chevr" label="不透明度"></num-field></div>
  <div class="r m" style="margin-top:33px">${ic('dots')}</div></section>`);

/* floating window frame: top strip with collapse and close */
define('panel-window',`<style>
 :host{position:absolute;background:#535353;border:1px solid #343434;border-radius:4px 4px 0 0;box-shadow:0 1px 5px #0005;color:#d0d0d0;font:12px/16px "Noto Sans CJK SC",sans-serif}
 .h{height:13px;background:#434343;border-bottom:1px solid #3a3a3a;display:flex;justify-content:flex-end;align-items:center;gap:10px;padding-right:4px;border-radius:3px 3px 0 0}
 .b{height:8px;border-top:2px solid #3c3c3c;display:flex;justify-content:center;padding-top:1px}
 .b i{width:19px;height:4px;background:repeating-linear-gradient(90deg,#333 0 1px,transparent 1px 2px)}
 :host([plain]) .b{display:none}
 </style><div class="h">${ic('dbl')}${ic('x')}</div><slot></slot><div class="b"><i></i></div>`);

define('panel-tabs',e=>{const on=+e.getAttribute('on');return `<style>
 :host{display:flex;height:19px;background:#434343;border-bottom:1px solid #3a3a3a;padding-right:6px;font-family:"DejaVu Sans","Noto Sans CJK SC",sans-serif}
 button{padding:0 7px;border-right:1px solid #3a3a3a;color:#a8a8a8;gap:5px;height:19px}
 .on{background:#535353;color:#f4f4f4}
 .d{padding-left:3px}
 .m{margin-left:auto;align-self:center;display:flex}
 </style>${e.getAttribute('tabs').split(',').map((t,i)=>t?`<button class="${i===on?'on':''} ${i===0&&e.hasAttribute('d')?'d':''}">${i===0&&e.hasAttribute('d')?ic('diam'):''}${t}</button>`:'').join('')}<span class="m">${ic('ham')}</span>`;});

define('colour-slider',e=>{const a=n=>e.getAttribute(n);return `<style>
 :host{display:flex;align-items:center;height:20px;font:13px/18px "Liberation Serif",serif}
 label{width:12px;font-size:12px}
 input{appearance:none;width:113px;height:20px;margin-right:2px;background:linear-gradient(90deg,${a('from')},${a('to')}) 5px 8px/103px 5px no-repeat}
 input::-webkit-slider-thumb{appearance:none;width:10px;height:9px;margin-top:12px;background:#c8c8c8;clip-path:polygon(50% 0,100% 45%,100% 100%,0 100%,0 45%)}
 </style><label for="s">${a('name')}</label><input id="s" type="range" min="0" max="255" value="${a('value')}"><num-field w="36" value="${a('value')}" label="${a('name')}"></num-field>`;});

define('colour-panel',`<style>
 :host{display:grid;grid-template-columns:48px 1fr;height:169px;padding:6px 15px 6px 5px;align-content:start;border-bottom:1px solid #3a3a3a}
 .l{display:grid;gap:6px;align-content:start}
 .r{display:grid;gap:13px;align-content:start;padding-top:1px}
 .row{display:flex;gap:9px}
 .q{display:flex;width:40px;height:14px;border:1px solid #222}.q i{flex:1;background:#fff}.q .n{background:linear-gradient(to top left,transparent 44%,#f00 44% 56%,transparent 56%),#fff}.q .k{background:#000}
 .x{grid-column:1/3;display:flex;justify-content:space-between;align-items:center;margin:17px 0 7px}
 .x span{display:flex;align-items:center;gap:3px}
 .sp{grid-column:1/3;height:23px;margin-right:1px;border:1px solid #333;background:linear-gradient(#fff,#fff0 50%,#0000 50%,#000),linear-gradient(90deg,#f00,#ff0 17%,#0f0 33%,#0ff 50%,#00f 67%,#f0f 83%,#f00)}
 </style>
 <div class="l"><div class="row">${ic('deflt')}${ic('swap')}</div><fill-stroke s="20" o="10"></fill-stroke><div class="row" style="padding:8px 0 0 6px;align-items:center;gap:7px">${ic('cube')}<colour-chip s="14" c="#f90"></colour-chip></div></div>
 <div class="r"><colour-slider name="R" value="231" from="#009c00" to="#ff9c00"></colour-slider><colour-slider name="G" value="156" from="#e70000" to="#e7ff00"></colour-slider><colour-slider name="B" value="0" from="#e79c00" to="#e79cff"></colour-slider></div>
 <div class="x"><div class="q"><i class="n"></i><i class="k"></i><i></i></div><span># <num-field w="46" value="e79c00" label="十六进制"></num-field></span></div>
 <div class="sp"></div>`);

const nf=(i,v,c)=>`<span class="f">${ic(i)}<num-field stepper w="80" value="${v}" end="chev" ${c||''}></num-field></span>`;
define('character-panel',`<style>
 :host{display:block;padding:5px 6px 7px 5px;border-bottom:1px solid #3a3a3a}
 .font{display:flex;width:220px;height:20px;border:1px solid #646464;border-radius:3px;background:#454545;align-items:center;padding-left:2px;font:600 13px/18px "Liberation Serif","Noto Sans CJK SC",serif;color:#f0f0f0;margin-bottom:6px}
 .font input{flex:1;padding:0 7px;font-weight:500}.font button{width:18px;height:18px;border-left:1px solid #646464}
 .g{display:grid;grid-template-columns:126px 1fr;row-gap:6px;border-top:2px solid #4a4a4a;margin-top:6px;padding-top:5px}
 .f{display:flex;align-items:center;gap:3px;height:20px}
 .f:nth-child(2n){justify-content:flex-end}
 .t{display:flex;align-items:center;justify-content:space-between;height:26px;border:solid #4a4a4a;border-width:2px 0;margin:6px 0 7px;padding:0 6px 0 4px;font:15px/16px "Liberation Serif",serif;color:#d0d0d0}
 .t span{display:flex;gap:14px}
 .t button{align-items:baseline}
 .t i{font:8px/8px "Liberation Serif",serif}
 .t .up{align-self:flex-start}.t .dn{align-self:flex-end}
 .z{display:flex;justify-content:space-between;align-items:center}
 .aa{display:flex;padding-left:18px;font:12px/14px "Open Sans",sans-serif}.aa b{font-weight:400;margin-bottom:4px}.aa i{font-style:normal;margin-top:3px}
 .sc{font-size:11px}
 </style>
 <label class="font">${ic('search')}<input value="Adobe 宋体 Std L" aria-label="字体"><button aria-label="字体列表">${ic('chev')}</button></label>
 <num-field w="228" value="–" end="chev" label="字体样式"></num-field>
 <div class="g">${nf('c1','12 pt')}${nf('d1','(14.4 p')}${nf('c2','100%')}${nf('d2','100%')}${nf('c3','自动','cjk')}${nf('d3','0')}</div>
 <div class="g">${nf('ts1','0%')}<span></span><span class="f">${ic('ts2')}<drop-list w="78" value="自动" label="左间距"></drop-list></span><span class="f">${ic('ts3')}<drop-list w="78" value="自动" label="右间距"></drop-list></span></div>
 <div class="g">${nf('base','0 pt')}${nf('rot','0°')}</div>
 <div class="t"><span><button>TT</button><button>T<span class="sc">T</span></button></span><span><button>T<i class="up">1</i></button><button>T<i class="dn">1</i></button></span><span style="gap:20px"><button style="text-decoration:underline">T</button><button style="text-decoration:line-through">T</button></span></div>
 <div class="z"><drop-list w="90" value="英语： 美国" label="语言"></drop-list><span class="aa"><b>a</b><i>a</i></span><drop-list w="90" value="锐化" label="消除锯齿"></drop-list></div>`);

define('pathfinder-panel',`<style>
 :host{display:block;padding:5px 11px 7px 5px;color:#c8c8c8}
 .r{display:flex;align-items:center;height:22px;padding-left:6px;gap:22px;margin:6px 0 7px}
 .x{margin-left:-4px;width:74px;height:20px;background:#5a5a5a;color:#808080}
 .r2{padding-left:9px;justify-content:space-between;padding-right:12px;margin:5px 0 0}
 </style>
 <div>形状模式 :</div><div class="r">${['pu','pm','pi','pe'].map(ic).join('')}<button class="x" disabled>扩展</button></div>
 <div>路径查找器 :</div><div class="r r2">${['pd','pt','pg','pc','po','pb'].map(ic).join('')}</div>`);

define('transform-panel',`<style>
 :host{display:block;padding:4px 5px 2px}
 .g{display:grid;grid-template-columns:1fr auto 24px;gap:6px 5px;align-items:center}
 .l{display:flex;justify-content:flex-end;align-items:center;gap:5px}
 .k{grid-row:1/3;grid-column:3;width:24px;height:24px;background:#2e2e2e;border-radius:3px}
 .a{display:flex;justify-content:flex-end;align-items:center;gap:8px}
 .s{border-top:2px solid #4a4a4a;height:0}
 label{display:flex;align-items:center;gap:5px;height:20px;color:#f0f0f0;font-weight:500}
 input{appearance:none;width:12px;height:12px;border:1px solid #c8c8c8;margin:0}
 </style>
 <div class="g"><span class="l">宽 :</span><num-field w="56" value="450 px" label="宽"></num-field><span class="l">高 :</span><num-field w="56" value="450 px" label="高"></num-field><button class="k" aria-label="约束比例">${ic('link')}</button></div>
 <div class="a" style="margin:6px 37px 6px 0"><num-field w="56" value="0°" end="chev" label="旋转"></num-field></div><div class="s"></div>
 <div class="a" style="margin:31px 27px 0 0"><num-field w="58" value="450 px" label="宽度"></num-field>${ic('vh')}</div>
 <div class="a" style="margin:37px 23px 15px 0;gap:7px"><num-field w="57" value="0°" end="chev" label="角度"></num-field>${ic('dial')}</div>
 <div style="padding-left:7px;height:22px">${ic('pie')}</div><div class="s"></div>
 <div style="padding-top:3px"><label><input type="checkbox">缩放圆角</label><label><input type="checkbox">缩放描边和效果</label></div>`);

define('gradient-panel',`<style>
 :host{display:grid;grid-template-columns:41px 37px 70px;gap:5px 4px;padding:24px 5px 5px;color:#7c7c7c}
 span{display:flex;align-items:center;justify-content:flex-end;height:21px;white-space:nowrap}
 .sw{grid-row:1;grid-column:1;display:flex;gap:3px;align-items:center;height:28px;margin-bottom:-7px}
 .sw i{width:32px;height:28px;border:1px solid #222;background:linear-gradient(90deg,#fff,#231815)}
 .fs{grid-row:2/4;grid-column:1;align-self:start;padding-top:10px}
 .bar{grid-column:1/4;grid-row:5;display:flex;align-items:center;gap:13px;height:20px;width:225px;padding-left:5px;margin:8px 0 22px}
 .bar i{flex:1;height:20px;border:1px solid #222;background:linear-gradient(90deg,#fff,#9b9593 45%,#4d413d 80%,#231815)}
 .w{grid-column:1/3}
 .c1{grid-column:1;justify-content:flex-start;padding-left:8px}.c2{grid-column:2}.c3{grid-column:3}
 .r1{grid-row:1}.r2{grid-row:2}.r3{grid-row:3}.r4{grid-row:4}.r6{grid-row:6}.r7{grid-row:7}
 </style>
 <div class="sw"><i></i>${ic('tri')}</div><span class="c2 r1" style="color:#d0d0d0">类型 :</span><drop-list class="c3 r1" off w="70" label="类型"></drop-list>
 <div class="fs"><fill-stroke s="20" o="10"></fill-stroke></div>
 <span class="c2 r2">描边 :</span>
 <span class="c2 r3">${ic('angle')}</span>
 <span class="c1 r4">${ic('rev')}</span><span class="c2 r4">${ic('aspect')}</span><drop-list class="c3 r4" off w="70" label="长宽比"></drop-list>
 <div class="bar"><i></i>${ic('trash')}</div>
 <span class="w r6">不透明度 :</span><drop-list class="c3 r6" off w="70" label="不透明度"></drop-list>
 <span class="w r7">位置 :</span><drop-list class="c3 r7" off w="70" label="位置"></drop-list>`);

define('menu-item',e=>`<style>
 :host{display:block}
 button{width:100%;height:25px;justify-content:flex-start;padding:0 5px 2px 33px;color:#000}
 :host([head]) button{padding-left:23px;color:#a3a3a3;text-shadow:1px 1px #fff}
 :host([top]) button{padding-left:23px}
 :host([key]) button{padding-right:25px;padding-left:23px;color:#a0a0a0;text-shadow:1px 1px #fff}
 :host([on]) button{background:#0078d7;color:#fff}
 s{text-decoration:none;margin-left:auto}
 i{margin-left:auto;border:5px solid transparent;border-left-color:currentColor;border-right:0}
 </style><button role="menuitem"><slot></slot>${e.hasAttribute('key')?`<s>${e.getAttribute('key')}</s>`:''}${e.hasAttribute('sub')?'<i></i>':''}</button>`);

define('effect-menu',`<style>
 :host{position:absolute;left:325px;top:24px;width:269px;background:#efefef;border:1px solid #9c9c9c;padding:0 5px 1px 2px;box-shadow:3px 3px 2px #0007;font:15px/20px "Open Sans","Noto Sans CJK SC",sans-serif}
 hr{border:0;height:11px;margin:0;background:linear-gradient(#a0a0a0,#a0a0a0) 0 5px/100% 1px no-repeat}
 </style>
 <menu-item key="Shift+Ctrl+E">应用上一个效果</menu-item><menu-item key="Alt+Shift+Ctrl+E">上一个效果</menu-item><hr>
 <menu-item top>文档栅格效果设置(E)...</menu-item><hr><menu-item head>Illustrator 效果</menu-item>
 <menu-item sub>3D(3)</menu-item><menu-item sub>SVG 滤镜(G)</menu-item><menu-item sub on>变形(W)</menu-item><menu-item sub>扭曲和变换(D)</menu-item><menu-item>栅格化(R)...</menu-item><menu-item>裁剪标记(O)</menu-item><menu-item sub>路径(P)</menu-item><menu-item sub>路径查找器(F)</menu-item><menu-item sub>转换为形状(V)</menu-item><menu-item sub>风格化(S)</menu-item><hr>
 <menu-item head>Photoshop 效果</menu-item><menu-item>效果画廊...</menu-item><menu-item sub>像素化</menu-item><menu-item sub>扭曲</menu-item><menu-item sub>模糊</menu-item><menu-item sub>画笔描边</menu-item><menu-item sub>素描</menu-item><menu-item sub>纹理</menu-item><menu-item sub>艺术效果</menu-item><menu-item sub>视频</menu-item><menu-item sub>风格化</menu-item>`);

define('warp-menu',`<style>
 :host{position:absolute;left:589px;top:194px;width:190px;display:flex;flex-direction:column;gap:8px;padding:7px 11px 7px 10px;background:#f9f9f9;border-radius:8px;box-shadow:0 6px 14px #0004,0 0 0 1px #0001;font:15px/18px "Open Sans","Noto Sans CJK SC",sans-serif;color:#000}
 button{height:18px;padding-left:34px;justify-content:flex-start;border-radius:3px;display:flex}
 .on{background:#0078d7;color:#fff}
 </style>${['弧形(A)','下弧形(L)','上弧形(U)','拱形(H)','凸出(B)','凹壳(O)','凸壳(P)','旗形(G)','波形(W)','鱼形(F)','上升(R)','鱼眼(Y)','膨胀(I)','挤压(S)','扭转(T)'].map((t,i)=>`<button role="menuitem" class="${i===12?'on':''}">${t}...</button>`).join('')}`);

define('task-icon',e=>`<style>
 :host{display:grid;grid-template-rows:1fr 4px;justify-items:center;align-items:center;width:48px;height:48px;border-radius:4px;padding-top:3px;flex:none}
 :host([on]){background:#eef2fb;box-shadow:0 0 0 1px #cfd6e6}
 b{width:8px;height:4px;border-radius:2px;background:#7d828b}
 :host([on]) b{width:20px;background:#0078d4}
 .q{width:28px;height:28px;font:600 14px/22px "Open Sans",sans-serif;text-align:center;border:2px solid;background:#001d26;color:#00c8ff}
 .ai{background:#261300;color:#ff7c00}
 </style>${e.hasAttribute('t')?`<div class="q ${e.getAttribute('t')==='Ai'?'ai':''}">${e.getAttribute('t')}</div>`:ic(e.getAttribute('i'))}${e.hasAttribute('run')||e.hasAttribute('on')?'<b></b>':''}`);

define('task-bar',`<style>
 :host{display:grid;grid-template-columns:1fr auto 1fr;align-items:center;height:60px;background:linear-gradient(90deg,#e1eef7 0,#e3eef8 18%,#d2e1f9 24%,#d5dcf2 29%,#d2e1f8 43%,#d5def2 60%,#d6dcf0 73%,#dde9f6 85%,#dfecf7);color:#1c1c1c}
 .a{display:flex;gap:7px;grid-column:2;padding-left:1px}
 .tray{display:flex;align-items:center;justify-content:flex-end;padding-right:23px}
 .tray>*{margin-right:11px}
 .ime{font:18px/20px "Noto Sans CJK SC",sans-serif;color:#fff;text-shadow:1px 0 #444,-1px 0 #444,0 1px #444,0 -1px #444;margin:0 28px 0 5px}
 .clk{text-align:right;font:13px/20px "Open Sans",sans-serif;margin:0 0 2px 7px}
 </style>
 <div class="a"><task-icon i="win"></task-icon><task-icon i="find"></task-icon><task-icon i="task"></task-icon><task-icon i="widg"></task-icon><task-icon i="folder" run></task-icon><task-icon i="store"></task-icon><task-icon i="ie" run></task-icon><task-icon i="net" run></task-icon><task-icon i="qq"></task-icon><task-icon i="wechat" run></task-icon><task-icon t="Ps" run></task-icon><task-icon i="snip" run></task-icon><task-icon t="Ai" on></task-icon></div>
 <div class="tray">${ic('up')}${ic('nv')}${ic('cloud')}${ic('sync')}<span class="ime">英</span><span style="margin-right:28px">${ic('sogou')}</span>${ic('wifi')}${ic('vol')}${ic('bat')}<div class="clk">21:38<br>2021/11/18</div></div>`);

define('water-mark',`<style>
 :host{position:absolute;right:34px;bottom:29px;font:400 48px/60px "Noto Sans CJK SC",sans-serif;color:#fff;text-shadow:2px 2px 0 #000,3px 3px 1px #000;white-space:pre;pointer-events:none}
 b{font-weight:700}
 i{font:400 50px/60px "DejaVu Sans",sans-serif}
 </style><b>头条</b> <i>@</i>花花平面设计`);

define('ai-app',`<style>
 :host{display:grid;grid-template-rows:auto auto 1fr auto;height:100vh;position:relative;overflow:hidden}
 .w{display:grid;grid-template-columns:auto 1fr auto;min-height:0;border-bottom:1px solid #3a3a3a}
 .p1{right:129px;top:47px;width:240px}
 .p2{right:28px;top:452px;width:232px}
 .p3{right:106px;top:646px;width:242px}
 </style>
 <menu-bar></menu-bar><control-bar></control-bar>
 <div class="w"><tool-panel></tool-panel><doc-view></doc-view><panel-dock></panel-dock></div>
 <task-bar></task-bar>
 <panel-window class="p3"><gradient-panel></gradient-panel></panel-window>
 <panel-window class="p2" plain><panel-tabs tabs="" on="-1"></panel-tabs><transform-panel></transform-panel></panel-window>
 <panel-window class="p1"><panel-tabs d on="0" tabs="颜色,色板,画笔,符号"></panel-tabs><colour-panel></colour-panel><panel-tabs d on="0" tabs="字符,段落,OpenType"></panel-tabs><character-panel></character-panel><panel-tabs on="1" tabs="对齐,路径查找器"></panel-tabs><pathfinder-panel></pathfinder-panel></panel-window>
 <effect-menu></effect-menu><warp-menu></warp-menu><water-mark></water-mark>`);
</script>
</body>
</html>
